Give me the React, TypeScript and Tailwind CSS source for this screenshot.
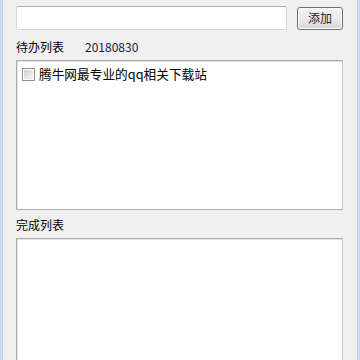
import React from "react";

const font = { fontFamily: '"Noto Sans CJK SC", "Liberation Sans", sans-serif' };

function ListBox({ children, height }: { children?: React.ReactNode; height: string }) {
  return (
    <div
      className={`${height} bg-white border border-[#a9acb3] border-r-[#c4c7cc] shadow-[inset_1px_1px_0_#e3e3e3]`}
    >
      {children}
    </div>
  );
}

export default function App() {
  return (
    <div className="w-[360px] h-[360px] overflow-hidden flex bg-[#f0f0f0] text-[#000]" style={font}>
      <div className="w-[3px] bg-gradient-to-r from-[#d2e0ef] to-[#b7cce3]" />
      <div className="flex-1 flex flex-col pl-[13px] pr-[14px]">
        {/* input row */}
        <div className="flex items-center mt-[6px] gap-[10px]">
          <input
            className="flex-1 h-[24px] bg-white border border-[#d5d8de] border-t-[#abadb3] rounded-[2px] outline-none px-1 text-[12px]"
          />
          <button className="w-[46px] h-[23px] rounded-[3px] border border-[#707070] bg-gradient-to-b from-[#f2f2f2] via-[#ebebeb] to-[#d6d6d6] text-[12px] leading-none text-[#222] shadow-[inset_0_0_0_1px_#fcfcfc]">
            添加
          </button>
        </div>

        {/* todo */}
        <div className="flex items-center h-[20px] mt-[8px] text-[12px]">
          <span>待办列表</span>
          <span className="ml-[21px] text-[#1a1a3a]">20180830</span>
        </div>
        <div className="mt-[4px]">
          <ListBox height="h-[150px]">
            <div className="flex items-center pl-[5px] pt-[4px] gap-[4px]">
              <span className="w-[13px] h-[13px] border border-[#8e8f8f] bg-white flex items-center justify-center">
                <span className="w-[9px] h-[9px] bg-gradient-to-br from-[#d2d2d2] to-[#f4f4f4]" />
              </span>
              <span className="text-[12.7px] leading-[18px]">腾牛网最专业的qq相关下载站</span>
            </div>
          </ListBox>
        </div>

        {/* done */}
        <div className="flex items-center h-[20px] mt-[6px] text-[12px]">
          <span>完成列表</span>
        </div>
        <div className="mt-[4px]">
          <ListBox height="h-[140px]" />
        </div>
      </div>
      <div className="w-[3px] bg-gradient-to-r from-[#b7cce3] to-[#d2e0ef]" />
    </div>
  );
}
